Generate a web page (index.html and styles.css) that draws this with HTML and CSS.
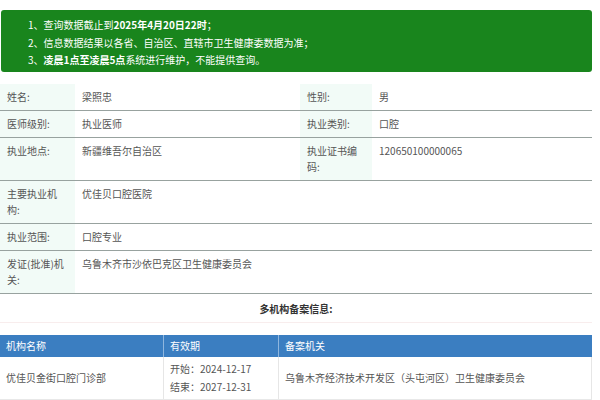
FILE: index.html
```html
<!DOCTYPE html>
<html lang="zh">
<head>
<meta charset="utf-8">
<link rel="stylesheet" href="styles.css">
</head>
<body>
<div class="page">
  <div class="notice">
    <p>1、查询数据截止到<b>2025年4月20日22时</b>；</p>
    <p>2、信息数据结果以各省、自治区、直辖市卫生健康委数据为准；</p>
    <p>3、<b>凌晨1点至凌晨5点</b>系统进行维护，不能提供查询。</p>
  </div>

  <div class="info">
    <div class="row">
      <div class="lbl">姓名:</div><div class="val">梁照忠</div>
      <div class="lbl lbl-r">性别:</div><div class="val val-r">男</div>
    </div>
    <div class="row">
      <div class="lbl">医师级别:</div><div class="val">执业医师</div>
      <div class="lbl lbl-r">执业类别:</div><div class="val val-r">口腔</div>
    </div>
    <div class="row">
      <div class="lbl">执业地点:</div><div class="val">新疆维吾尔自治区</div>
      <div class="lbl lbl-r">执业证书编码:</div><div class="val val-r">120650100000065</div>
    </div>
    <div class="row">
      <div class="lbl">主要执业机构:</div><div class="val val-wide">优佳贝口腔医院</div>
    </div>
    <div class="row">
      <div class="lbl">执业范围:</div><div class="val val-wide">口腔专业</div>
    </div>
    <div class="row">
      <div class="lbl">发证(批准)机关:</div><div class="val val-wide">乌鲁木齐市沙依巴克区卫生健康委员会</div>
    </div>
  </div>

  <div class="subtitle">多机构备案信息:</div>

  <div class="multi">
    <div class="mrow mhead">
      <div class="c1">机构名称</div>
      <div class="c2">有效期</div>
      <div class="c3">备案机关</div>
    </div>
    <div class="mrow mbody">
      <div class="c1">优佳贝金街口腔门诊部</div>
      <div class="c2">开始：2024-12-17<br>结束：2027-12-31</div>
      <div class="c3">乌鲁木齐经济技术开发区（头屯河区）卫生健康委员会</div>
    </div>
  </div>
</div>
</body>
</html>
```

FILE: styles.css
```css
* { box-sizing: border-box; }
html, body { margin: 0; padding: 0; background: #fff; }
body {
  font-family: "Noto Sans CJK SC", "Liberation Sans", sans-serif;
  font-size: 10px;
  color: #555;
}
.page {
  width: 593px;
  padding-top: 10px;
}
.notice {
  margin-left: 1px;
  width: 591px;
  height: 62px;
  background: #19851d;
  border-radius: 3px;
  color: #fff;
  padding: 6px 0 0 27px;
}
.notice p {
  margin: 0;
  line-height: 17.5px;
}
.notice b { font-weight: 700; }

.info {
  margin-top: 12px;
  width: 592px;
}
.row {
  display: flex;
  border-bottom: 1px solid #98a29f;
}
.lbl, .val {
  padding: 5px 7px;
  line-height: 16px;
}
.lbl {
  width: 75px;
  flex: none;
  background: #f2fbf7;
  color: #555;
}
.val {
  width: 225px;
  flex: none;
  color: #555;
}
.lbl-r { width: 72px; }
.val-r { width: 220px; }
.val-wide { flex: 1; width: auto; }

.subtitle {
  text-align: center;
  font-weight: 700;
  color: #333;
  line-height: 16px;
  padding-top: 7px;
  padding-bottom: 5px;
  border-bottom: 1px solid #f8eded;
  width: 592px;
  margin-bottom: 12px;
}

.multi { width: 592px; }
.mrow { display: flex; }
.mrow > div { padding: 0 6px; }
.c1 { width: 163px; flex: none; }
.c2 { width: 115px; flex: none; }
.c3 { flex: 1; }
.mhead {
  background: #3b7ec1;
  color: #fff;
  height: 22px;
  line-height: 22px;
}
.mhead > div + div { border-left: 1px solid #8fb6de; }
.mbody {
  border-bottom: 1px solid #e8e8e8;
}
.mbody > div {
  display: flex;
  align-items: center;
  padding-top: 3px;
  padding-bottom: 3px;
  line-height: 18px;
  border-left: 1px solid #e6e6e6;
}
.mbody > div:first-child { border-left: none; }
.mbody .c3 { border-right: 1px solid #e6e6e6; }
```
